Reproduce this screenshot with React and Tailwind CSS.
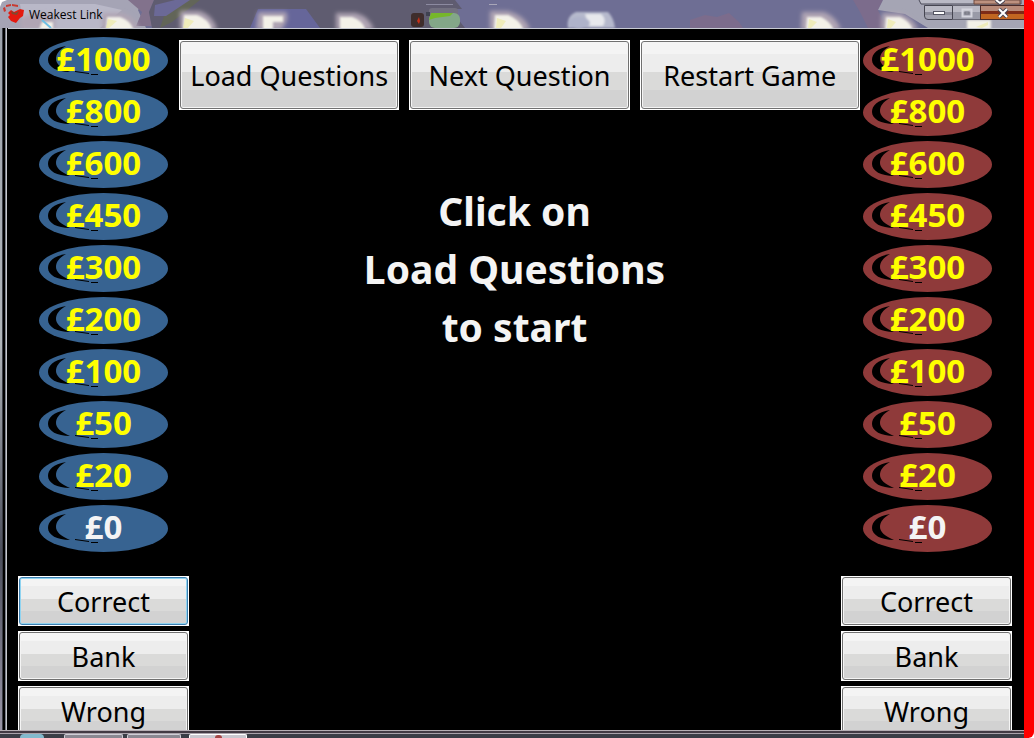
import React from "react";

const AMOUNTS = ["£1000", "£800", "£600", "£450", "£300", "£200", "£100", "£50", "£20", "£0"];

const FONT = "font-['Comic_Sans_MS','Noto_Sans',sans-serif]";

function GlassButton({ children, size, focused }) {
  const edge = focused ? "border-[#3c7fb1] ring-[#8fd3f0]" : "border-[#707070] ring-[#f4f4f4]";
  return (
    <div className={`flex shrink-0 bg-white p-px ${size}`}>
      <button
        type="button"
        className={`flex-1 rounded-[3px] border pt-[2px] ring-1 ring-inset bg-[linear-gradient(#f4f4f4_0_18%,#ededed_18%_46%,#dadad9_46%_72%,#d2d2d2_72%_100%)] text-[27px] leading-[36px] whitespace-nowrap text-black ${edge}`}
      >
        {children}
      </button>
    </div>
  );
}

function Chip({ amount, fill }) {
  return (
    <li className="grid h-[47px] w-[129px] place-items-center">
      <svg viewBox="0 0 129 47" className="col-start-1 row-start-1 h-full w-full" aria-hidden="true">
        <ellipse cx="64.5" cy="23.5" rx="64.5" ry="23.5" className={fill} />
        <path d="M27 9C14 11 9 17 9 23c0 7 9 12 22 12C22 31 17 27 17 22c0-5 3-9 10-13Z" fill="#000" />
        <path d="M36 34l14 2v1l-14-2zM52 37h7v1h-7z" fill="#000" />
      </svg>
      <span
        className={`col-start-1 row-start-1 pb-[3px] text-[33px] leading-[44px] font-bold ${amount === "£0" ? "text-[#f4f4f4]" : "text-[#ffff00]"}`}
      >
        {amount}
      </span>
    </li>
  );
}

function Ladder({ fill, label }) {
  return (
    <ul aria-label={label} className="flex shrink-0 flex-col gap-[5px]">
      {AMOUNTS.map((amount) => (
        <Chip key={amount} amount={amount} fill={fill} />
      ))}
    </ul>
  );
}

function TeamControls({ focused }) {
  return (
    <div className="flex flex-col gap-[5px]">
      <GlassButton size="h-[50px] w-[171px]" focused={focused}>Correct</GlassButton>
      <GlassButton size="h-[50px] w-[171px]">Bank</GlassButton>
      <GlassButton size="h-[50px] w-[171px]">Wrong</GlassButton>
    </div>
  );
}

function GlassBackdrop() {
  return (
    <svg viewBox="0 0 1024 28" preserveAspectRatio="none" className="absolute inset-0 h-full w-full" aria-hidden="true">
      <defs>
        <filter id="halo" x="-5%" y="-60%" width="110%" height="220%">
          <feGaussianBlur stdDeviation="2" />
        </filter>
        <filter id="core" x="-5%" y="-60%" width="110%" height="220%">
          <feGaussianBlur stdDeviation="1" />
        </filter>
      </defs>
      <rect width="1024" height="28" fill="#6e6e94" />
      <path d="M0 0H145L138 10 146 28H0Z" fill="#a5a4b5" />
      <path d="M20 4H95L122 10 100 28H24Z" fill="#b9b8c8" />
      <path d="M128 0h26l-5 12 3 14h-16l6-14z" fill="#82728c" />
      <path d="M154 0H455L462 9H450L465 28H152l-3-16z" fill="#5f5c70" />
      <path d="M188 0H200L172 22 160 28l4-12z" fill="#626558" />
      <path d="M155 5l20-5h15l-24 16h-12z" fill="#6b6997" />
      <path d="M258 9H306L320 28H250Z" fill="#66669a" />
      <path d="M690 20l15-5 12 2 12-4 10 9 4 6h-53zM853 0h30l-5 10 8 18h-18l-8-16z" fill="#7c6c8c" />
      <path d="M883 0H1024V28H928L905 14 878 10Z" fill="#a5a5b4" />
      <g fill="#b0a5b4" filter="url(#halo)">
        <path d="M20 18q20-10 35 0v12H20zM102 13h20q14 4 17 17h-37zM180 11h20q14 5 17 19h-37zM258 12h28q4 7-5 18h-25zM336 13h20q14 4 18 17h-38zM490 11h18q18 5 22 19h-40zM802 12h22q13 5 17 18h-40zM882 13h18q14 5 18 17h-37z" />
      </g>
      <g fill="#f3f1e8" filter="url(#core)">
        <path d="M42 22h11v8H39zM107 17h13q10 3 14 13h-28zM184 15h13q12 4 15 15h-29zM263 16h20v6h-10v8h-10zM340 17h12q10 3 14 13h-26zM495 15h13q11 4 16 15h-30zM807 17h14q9 4 13 13h-28zM886 17h14q10 4 13 13h-28zM967 20h24v10h-24z" />
      </g>
      <g fill="#eceaa8" opacity=".7">
        <path d="M108 19l9 2-8 7h-3zM185 18l9 3-6 7h-5zM497 18l9 3-5 7h-5zM809 19l8 3-6 6h-3zM888 19l8 3-5 6h-4zM976 27l12-5v3l-6 3z" />
      </g>
      <path d="M42 20l9 8" stroke="#6ebfe4" strokeWidth="2" />
      <rect x="411" y="13" width="13" height="14" rx="3" fill="#3f2d2c" />
      <path d="M419 17l1 4-1 3-2-3z" fill="#c83018" />
      <rect x="429" y="8" width="29" height="8" rx="3" fill="#737180" />
      <rect x="429" y="13" width="31" height="15" rx="6" fill="#83a788" />
      <path d="M431 13h22l-3 3-15 2-6 2z" fill="#76b72a" />
      <rect x="426" y="12" width="4" height="4" fill="#3f4251" />
      <g filter="url(#core)">
        <path d="M576 12h32q6 6 7 16h-47q-2-12 8-16z" fill="#b6b9cc" />
        <path d="M585 14h16q6 5 2 12h-14z" fill="#e7e8ec" />
        <ellipse cx="579" cy="23" rx="11" ry="6" fill="#afb3ca" />
      </g>
      <rect x="426" y="4" width="27" height="1" fill="#8c8aa0" />
      <rect x="489" y="4" width="8" height="1" fill="#a8a6b8" />
      <path d="M0 0h7L2 2 0 7z" fill="#fff" />
    </svg>
  );
}

function HeartLinkIcon() {
  return (
    <svg viewBox="0 0 22 22" className="h-[22px] w-[22px] shrink-0" aria-hidden="true">
      <path d="M6 11l3-3 3 2 6-3 4 1-1 6-3 2-4 5-5-2-3-4 2-2z" fill="#e3190f" />
      <path d="M9 9l4 2 4-2-2 4-5-1z" fill="#7d4a30" />
      <path d="M1 6l2-1 1 4-2 1zM4 3l5-1v2L4 5zM10 2l6 1v2l-6-1z" fill="#c93a30" />
    </svg>
  );
}

function WindowControls() {
  return (
    <div className="relative flex h-[20px] items-end">
      <svg viewBox="0 0 106 6" preserveAspectRatio="none" className="absolute top-0 right-0 h-[6px] w-[106px]" aria-hidden="true">
        <path d="M1 0l2 4h100V0" fill="#b9b9c5" stroke="#4a4a58" />
        <path d="M56 0h46v4H56z" fill="#bd917f" stroke="#6e4a40" />
      </svg>
      <button type="button" aria-label="Minimise" className="relative flex h-[15px] w-[29px] items-center justify-center rounded-bl-[4px] border border-[#454551] bg-[linear-gradient(#b9b9c4_0_45%,#8b8b99_45%_70%,#a2a2af_70%_100%)]">
        <svg viewBox="0 0 12 4" className="h-[4px] w-[12px]"><rect x=".5" y=".5" width="11" height="3" fill="#fff" stroke="#555563" /></svg>
      </button>
      <button type="button" aria-label="Restore" className="relative flex h-[15px] w-[27px] items-center justify-center border-y border-[#656572] bg-[linear-gradient(#b9b9c4_0_45%,#999aa7_45%_100%)]">
        <svg viewBox="0 0 12 10" className="h-[10px] w-[12px]" fill="none"><rect x="1.5" y="1.5" width="9" height="7" stroke="#d5d5de" strokeWidth="2" /><rect x="4" y="4" width="4" height="2" stroke="#74747f" /></svg>
      </button>
      <button type="button" aria-label="Close" className="relative flex h-[15px] w-[44px] items-center justify-center border border-r-0 border-[#4b2a27] bg-[linear-gradient(#b98a78_0_40%,#7e2b17_40%_65%,#c26621_65%_100%)]">
        <svg viewBox="0 0 12 10" className="h-[10px] w-[12px]"><path d="M2 1l8 8M10 1L2 9" stroke="#494452" strokeWidth="4" /><path d="M2 1l8 8M10 1L2 9" stroke="#fff" strokeWidth="2" /></svg>
      </button>
      <svg viewBox="0 0 10 5" className="absolute top-0 right-[19px] h-[5px] w-[10px]" fill="none" aria-hidden="true">
        <path d="M1 0l4 3 4-3" stroke="#494452" strokeWidth="4" />
        <path d="M1 0l4 3 4-3" stroke="#fff" strokeWidth="2" />
      </svg>
    </div>
  );
}

function TaskbarEdge() {
  return (
    <div className="flex h-[8px] shrink-0 flex-col overflow-hidden bg-[#3b3d46]">
      <div className="h-px bg-[#b5adb3]" />
      <div className="h-[2px] bg-[#433a44]" />
      <div className="h-px bg-[#aaa2ab]" />
      <div className="flex h-[4px] gap-[4px] pl-[20px]">
        <div className="mr-[16px] w-[24px] rounded-t-full bg-[#83b9cd]" />
        <div className="w-[59px] rounded-t-[2px] border border-b-0 border-[#d0ced6] bg-[#8a8791]" />
        <div className="w-[54px] rounded-t-[2px] border border-b-0 border-[#d0ced6] bg-[#8a8791]" />
        <div className="ml-[4px] flex w-[58px] justify-center rounded-t-[2px] border border-b-0 border-white bg-[#cac7cf]">
          <div className="w-[7px] rounded-t-full bg-[#a54545]" />
        </div>
      </div>
    </div>
  );
}

export default function App() {
  return (
    <div className={`flex h-screen overflow-hidden bg-black ${FONT}`}>
      <div className="flex min-w-0 flex-1 flex-col">
        <header className="relative flex h-[28px] shrink-0 items-start justify-between overflow-hidden">
          <GlassBackdrop />
          <div className="relative flex items-center pl-[2px]">
            <HeartLinkIcon />
            <h1 className="pt-[5px] pl-[5px] font-['Segoe_UI','Open_Sans',sans-serif] text-[12px] leading-[20px] text-black">Weakest Link</h1>
          </div>
          <WindowControls />
        </header>

        <div className="flex min-h-0 flex-1">
          <div className="flex w-[8px] shrink-0 bg-black">
            <div className="w-[2px] bg-[linear-gradient(#9da3ad,#b0b5ba_45%,#4b4e5c_75%,#9a96a8)]" />
            <div className="w-px bg-[#3b3d46]" />
            <div className="ml-[2px] w-px bg-[#777b86]" />
            <div className="w-px bg-[#c9cbd0]" />
          </div>

          <main className="flex min-w-0 flex-1 flex-col overflow-hidden border-t border-[#c7cad2] bg-black pt-[8px]">
            <div className="flex pr-[32px] pl-[31px]">
              <Ladder fill="fill-[#376391]" label="Blue team money ladder" />
              <div className="mt-[3px] mr-[3px] ml-[11px] min-w-0 flex-1">
                <div className="grid grid-cols-3 gap-[10px]">
                  <GlassButton size="h-[70px]">Load Questions</GlassButton>
                  <GlassButton size="h-[70px]">Next Question</GlassButton>
                  <GlassButton size="h-[70px]">Restart Game</GlassButton>
                </div>
                <p className="pt-[72px] pr-[10px] text-center text-[39px] leading-[58px] font-bold text-[#f4f4f4]">
                  Click on
                  <br />
                  Load Questions
                  <br />
                  to start
                </p>
              </div>
              <Ladder fill="fill-[#8f3a3a]" label="Red team money ladder" />
            </div>

            <div className="mt-[24px] flex justify-between pr-[12px] pl-[10px]">
              <TeamControls focused />
              <TeamControls />
            </div>
          </main>
        </div>

        <TaskbarEdge />
      </div>
      <div className="flex w-[10px] shrink-0 bg-[linear-gradient(90deg,#ff0000_50%,#ffffff_50%)]">
        <div className="flex-1 rounded-tr-[4px] rounded-br-[6px] bg-[#ff0000]" />
      </div>
    </div>
  );
}
